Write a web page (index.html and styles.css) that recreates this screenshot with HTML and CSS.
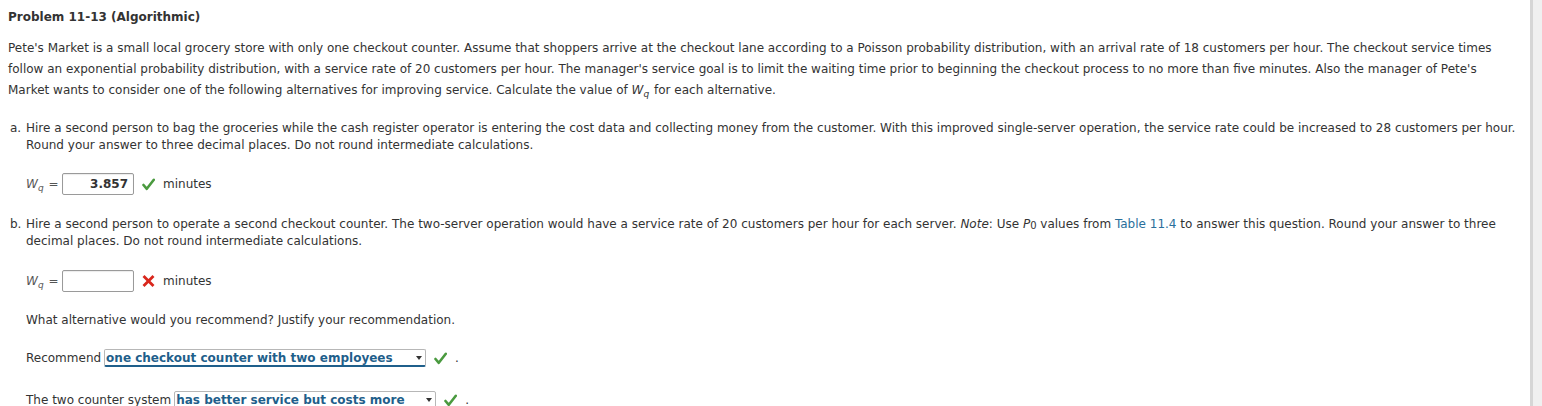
FILE: index.html
```html
<!DOCTYPE html>
<html>
<head>
<meta charset="utf-8">
<link rel="stylesheet" href="styles.css">
</head>
<body>
<div class="page">
  <main class="content">
    <h1 class="title">Problem 11-13 (Algorithmic)</h1>
    <p class="intro">Pete's Market is a small local grocery store with only one checkout counter. Assume that shoppers arrive at the checkout lane according to a Poisson probability distribution, with an arrival rate of 18 customers per hour. The checkout service times follow an exponential probability distribution, with a service rate of 20 customers per hour. The manager's service goal is to limit the waiting time prior to beginning the checkout process to no more than five minutes. Also the manager of Pete's Market wants to consider one of the following alternatives for improving service. Calculate the value of <i class="wq">W<span class="sub">q</span></i> for each alternative.</p>

    <div class="part part-a">
      <span class="letter">a.</span>
      <div class="part-body">
        <p class="question">Hire a second person to bag the groceries while the cash register operator is entering the cost data and collecting money from the customer. With this improved single-server operation, the service rate could be increased to 28 customers per hour. Round your answer to three decimal places. Do not round intermediate calculations.</p>
        <div class="answer-row first-answer">
          <span class="var"><i class="wq">W<span class="sub">q</span></i> =</span>
          <span class="box">3.857</span>
          <span class="mark ok"><svg width="13" height="13" viewBox="0 0 13 13"><path d="M1.5 7 L4.8 10.8 L11.8 1.8" fill="none" stroke="#4a9a3f" stroke-width="2.6" stroke-linecap="round" stroke-linejoin="round"/></svg></span>
          <span class="unit">minutes</span>
        </div>
      </div>
    </div>

    <div class="part part-b">
      <span class="letter">b.</span>
      <div class="part-body">
        <p class="question">Hire a second person to operate a second checkout counter. The two-server operation would have a service rate of 20 customers per hour for each server. <i>Note</i>: Use <i>P</i><span class="sub0">0</span> values from <a class="link">Table 11.4</a> to answer this question. Round your answer to three decimal places. Do not round intermediate calculations.</p>
        <div class="answer-row second-answer">
          <span class="var"><i class="wq">W<span class="sub">q</span></i> =</span>
          <span class="box"></span>
          <span class="mark bad"><svg width="13" height="12" viewBox="0 0 13 12"><path d="M2.5 2 L10.5 10 M10.5 2 L2.5 10" fill="none" stroke="#d9261c" stroke-width="2.8" stroke-linecap="square"/></svg></span>
          <span class="unit">minutes</span>
        </div>
        <p class="prompt">What alternative would you recommend? Justify your recommendation.</p>
        <div class="select-row first">
          <span>Recommend</span>
          <span class="select wide"><span class="sel-text">one checkout counter with two employees</span><span class="arrow"></span></span>
          <span class="mark ok"><svg width="13" height="13" viewBox="0 0 13 13"><path d="M1.5 7 L4.8 10.8 L11.8 1.8" fill="none" stroke="#4a9a3f" stroke-width="2.6" stroke-linecap="round" stroke-linejoin="round"/></svg></span>
          <span class="dot">.</span>
        </div>
        <div class="select-row second">
          <span>The two counter system</span>
          <span class="select plain"><span class="sel-text">has better service but costs more</span><span class="arrow"></span></span>
          <span class="mark ok"><svg width="13" height="13" viewBox="0 0 13 13"><path d="M1.5 7 L4.8 10.8 L11.8 1.8" fill="none" stroke="#4a9a3f" stroke-width="2.6" stroke-linecap="round" stroke-linejoin="round"/></svg></span>
          <span class="dot">.</span>
        </div>
      </div>
    </div>
  </main>
  <div class="scrollbar"></div>
</div>
</body>
</html>
```

FILE: styles.css
```css
html, body {
  margin: 0;
  padding: 0;
  background: #ffffff;
  height: 100%;
  overflow: hidden;
}

.page {
  display: flex;
  height: 406px;
  font-family: "DejaVu Sans", Verdana, sans-serif;
  font-size: 12px;
  color: #333333;
}

.content {
  flex: 1;
  padding: 0 12px 0 8px;
}

.title {
  font-size: 12px;
  font-weight: bold;
  margin: 9px 0 0 0;
  line-height: 16px;
}

.intro {
  margin: 13px 0 0 0;
  line-height: 21px;
}

.wq {
  display: inline-block;
  line-height: 12px;
  padding-right: 1px;
}

.sub {
  display: inline-block;
  font-size: 9px;
  line-height: 9px;
  transform: translateY(3px);
}

.sub0 {
  font-size: 10px;
  line-height: 10px;
  display: inline-block;
  transform: translateY(1px);
}

.part {
  display: flex;
  align-items: flex-start;
}

.part-a {
  margin-top: 19px;
}

.part-b {
  margin-top: 21px;
}

.letter {
  width: 16px;
  padding-left: 2px;
  line-height: 17px;
}

.part-body {
  flex: 1;
}

.question {
  margin: 0;
  line-height: 17px;
}

.answer-row {
  display: flex;
  align-items: center;
  height: 22px;
}

.first-answer {
  margin-top: 19px;
}

.second-answer {
  margin-top: 20px;
}

.var {
  width: 36px;
  color: #555;
}

.box {
  box-sizing: border-box;
  width: 72px;
  height: 22px;
  border: 1px solid #9a9a9a;
  border-radius: 2px;
  box-shadow: inset 0 1px 1px rgba(0,0,0,0.08);
  text-align: right;
  font-weight: bold;
  line-height: 20px;
  padding-right: 5px;
}

.mark {
  display: inline-flex;
  align-items: center;
  margin-left: 8px;
  margin-right: 8px;
}

.link {
  color: #2a6f9b;
}

.prompt {
  margin: 19px 0 0 0;
  line-height: 18px;
}

.select-row {
  display: flex;
  align-items: center;
  height: 20px;
}

.select-row.first {
  margin-top: 19px;
}

.select-row.second {
  margin-top: 22px;
}

.select {
  display: inline-flex;
  align-items: center;
  box-sizing: border-box;
  height: 18px;
  margin-left: 3px;
  border: 1px solid #b7b7b7;
  border-radius: 2px;
  color: #1f5f8b;
  font-weight: bold;
  font-size: 12px;
  padding-left: 1px;
}

.select.wide {
  width: 322px;
  border-bottom: 2px solid #1f5f8b;
}

.select.plain {
  width: 262px;
}

.sel-text {
  flex: 1;
  white-space: nowrap;
}

.arrow {
  width: 0;
  height: 0;
  border-left: 3px solid transparent;
  border-right: 3px solid transparent;
  border-top: 4px solid #333;
  margin-right: 3px;
}

.scrollbar {
  width: 9px;
  background: #f0f0f0;
  border-left: 3px solid #d6d6d6;
}
```
